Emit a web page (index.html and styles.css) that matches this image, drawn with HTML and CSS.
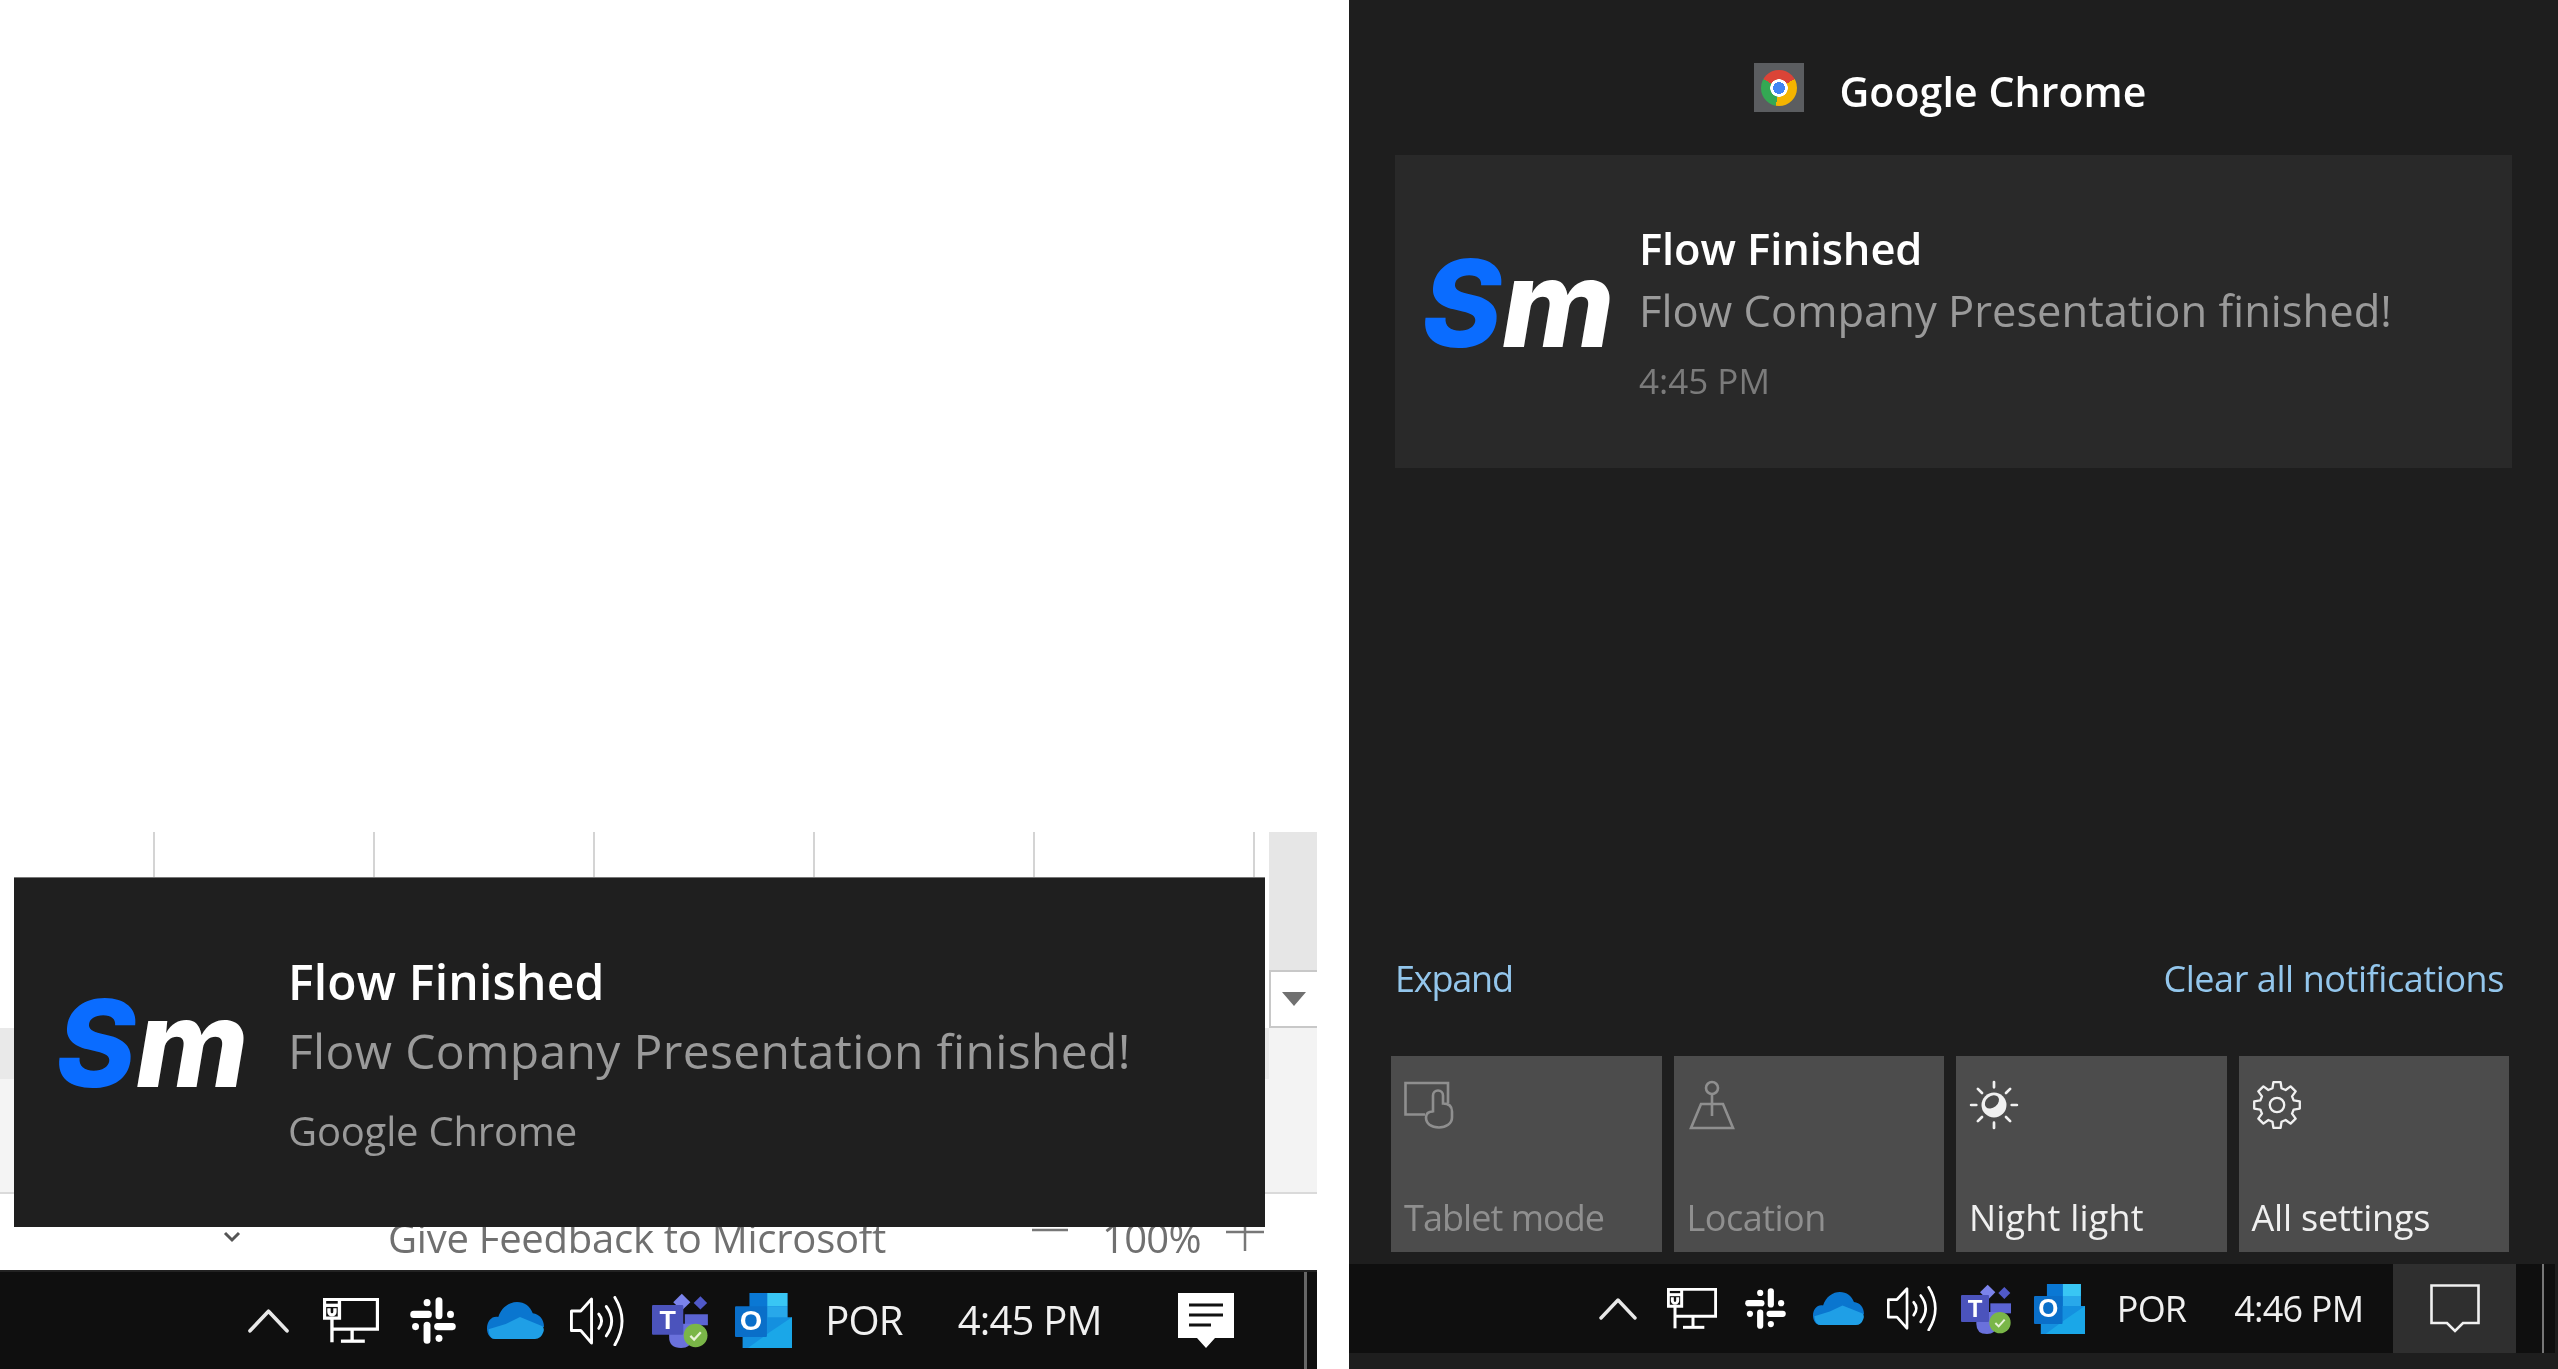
FILE: index.html
```html
<!DOCTYPE html>
<html lang="en">
<head>
<meta charset="utf-8">
<title>Windows notification comparison</title>
<link rel="stylesheet" href="styles.css">
</head>
<body>
<svg class="defs" aria-hidden="true">
  <symbol id="i-caret" viewBox="0 0 38 23"><path d="M2 21 19 3l17 18" fill="none" stroke="#e8e8e8" stroke-width="3.4" stroke-linecap="round" stroke-linejoin="round"/></symbol>
  <symbol id="i-net" viewBox="0 0 150 123" preserveAspectRatio="none"><g fill="none" stroke="#fff" stroke-width="9"><path d="M4 4H146V85H24"/><path d="M4 4H44V55H4Z"/><path d="M4 20H44"/><path d="M16 28v10a8 8 0 0 0 16 0V28"/><path d="M24 55V121"/><path d="M78 85V116"/><path d="M48 118H112"/></g></symbol>
  <symbol id="i-slack" viewBox="0 0 100 100" preserveAspectRatio="none"><g fill="none" stroke="#fff" stroke-width="15" stroke-linecap="round"><path d="M8 37H40"/><path d="M63 8V40"/><path d="M60 63H92"/><path d="M37 60V92"/><path d="M37 12H37.1"/><path d="M88 37H88.1"/><path d="M63 88H63.1"/><path d="M12 63H12.1"/></g></symbol>
  <symbol id="i-drive" viewBox="0 0 152 98" preserveAspectRatio="none"><path d="M30 40C38 14 60 0 80 0c20 0 36 12 42 30 18 2 30 16 30 36L60 98H22C8 98 0 84 0 70 0 50 14 36 30 40Z" fill="#0a76cf"/><path d="M4 72 50 58 88 40l60 24q6 8 2 16-6 18-22 18H22Q6 98 4 72Z" fill="#1f9fe6"/></symbol>
  <symbol id="i-vol" viewBox="0 0 156 133" preserveAspectRatio="none"><g fill="none" stroke="#fff" stroke-width="8" stroke-linecap="round" stroke-linejoin="round"><path d="M4 40H30L60 8V125L30 92H4Z"/><path d="M80 48q16 18 0 38"/><path d="M101 28q30 38 0 78"/><path d="M125 4q40 62 0 126"/></g></symbol>
  <symbol id="i-action-fill" viewBox="0 0 56 55" preserveAspectRatio="none"><path d="M0 0H56V45H37L28 55 19 45H0Z" fill="#fff"/><path d="M11 12H45M11 22H45M11 32H33" stroke="#111" stroke-width="3.2"/></symbol>
  <symbol id="i-action-line" viewBox="0 0 50 49" preserveAspectRatio="none"><path d="M1.500 1.500H48.500V39H33L25 47 17 39H1.500Z" fill="none" stroke="#f0f0f0" stroke-width="2.6"/></symbol>
</svg>

<main class="screen">
  <section class="desk">
    <div class="sheet">
      <div class="cols">
        <span class="col col-first"></span><span class="col"></span><span class="col"></span><span class="col"></span><span class="col"></span><span class="col"></span><span class="col col-last"></span>
      </div>
      <div class="scroll">
        <div class="scroll-top"></div>
        <div class="dropdown"><span class="tri"></span></div>
        <div class="scroll-fill"></div>
      </div>
    </div>

    <footer class="status">
      <svg class="chev" viewBox="0 0 20 12"><path d="M3 2l7 7 7-7" fill="none" stroke="#555" stroke-width="3"/></svg>
      <span class="status-text">Give Feedback to Microsoft</span>
      <svg class="zoom-minus" viewBox="0 0 36 4"><path d="M0 2H36" stroke="#777" stroke-width="2.5"/></svg>
      <span class="zoom-val">100%</span>
      <svg class="zoom-plus" viewBox="0 0 38 38"><path d="M0 19H38M19 0V38" stroke="#777" stroke-width="2.5"/></svg>
    </footer>

    <div class="taskbar taskbar-a">
      <div class="tray">
        <span class="slot"><svg class="t-caret"><use href="#i-caret"/></svg></span>
        <span class="slot"><svg class="t-net"><use href="#i-net"/></svg></span>
        <span class="slot"><svg class="t-slack"><use href="#i-slack"/></svg></span>
        <span class="slot"><svg class="t-drive"><use href="#i-drive"/></svg></span>
        <span class="slot"><svg class="t-vol"><use href="#i-vol"/></svg></span>
        <span class="slot"><svg class="t-teams" viewBox="0 0 153 150" preserveAspectRatio="none">
          <path d="M80 2 103 25 80 48 57 25Z" fill="#7b83eb"/><path d="M130 9 148 27 130 45 112 27Z" fill="#5059c9"/>
          <path d="M88 58h62v30H88Z" fill="#5b64d3"/><path d="M46 84h62v40q-4 26-30 26-32 0-32-30Z" fill="#6a71dc"/>
          <rect x="0" y="33" width="84" height="81" rx="3" fill="#4b53bc"/>
          <text class="icon-letter" x="42" y="98" text-anchor="middle">T</text>
          <circle cx="117" cy="116" r="32" fill="#7ab648"/><path d="M103 117l10 10 18-20" fill="none" stroke="#e8f3d8" stroke-width="6"/>
        </svg></span>
        <span class="slot"><svg class="t-outlook" viewBox="0 0 150 150" preserveAspectRatio="none">
          <path d="M38 0H138V72H38Z" fill="#0a78d4"/><path d="M85 0H138V36H85Z" fill="#39c6f4"/><path d="M85 36H138V72H85Z" fill="#28a8ea"/>
          <path d="M20 66H150V150H20Z" fill="#1490df"/><path d="M90 108 150 66V150H34Z" fill="#1aa7e8"/>
          <rect x="0" y="36" width="84" height="84" rx="3" fill="#0a6fc9"/>
          <text class="icon-letter icon-letter-o" x="42" y="100" text-anchor="middle">O</text>
        </svg></span>
      </div>
      <span class="lang">POR</span>
      <span class="clock">4:45 PM</span>
      <svg class="action-icon"><use href="#i-action-fill"/></svg>
      <span class="vline"></span>
    </div>

    <article class="toast">
      <div class="logo"><span class="logo-s">S</span><span class="logo-m">m</span></div>
      <div class="toast-text">
        <div class="title">Flow Finished</div>
        <div class="body">Flow Company Presentation finished!</div>
        <div class="source">Google Chrome</div>
      </div>
    </article>
  </section>

  <aside class="panel">
    <header class="app-head">
      <div class="app-icon"><span class="chrome"></span></div>
      <span class="app-name">Google Chrome</span>
    </header>

    <article class="card">
      <div class="logo"><span class="logo-s">S</span><span class="logo-m">m</span></div>
      <div class="card-text">
        <div class="card-title">Flow Finished</div>
        <div class="card-body">Flow Company Presentation finished!</div>
        <div class="card-time">4:45 PM</div>
      </div>
    </article>

    <div class="links">
      <span class="link link-short">Expand</span>
      <span class="link">Clear all notifications</span>
    </div>

    <div class="tiles">
      <div class="tile tile-off">
        <svg class="tile-icon" viewBox="0 0 50 47"><g fill="none" stroke="#8f8f8f" stroke-width="2.6"><path d="M21 33H1.500V1.500H44V22"/><path d="M29 31V14a5 5 0 0 1 10 0V22c5 0 9 2 9 8v6c0 6-6 10-13 10-8 0-13-4-13-10 0-4 3-6 7-6"/></g></svg>
        <span class="tile-label label-tablet">Tablet mode</span>
      </div>
      <div class="tile tile-off">
        <svg class="tile-icon" viewBox="0 0 46 50"><g fill="none" stroke="#8f8f8f" stroke-width="2.6"><circle cx="23" cy="8" r="6"/><path d="M23 14V36"/><path d="M12 24H34L44 48H2Z"/></g></svg>
        <span class="tile-label">Location</span>
      </div>
      <div class="tile">
        <svg class="tile-icon" viewBox="0 0 48 48"><g stroke="#f0f0f0" stroke-width="2.6" stroke-linecap="round"><path d="M24 2V7M24 41V46M2 24H7M41 24H46M8.500 8.500l4 4M35.500 35.500l4 4M8.500 39.500l4-4M35.500 12.500l4-4"/></g><circle cx="24" cy="24" r="12" fill="#f0f0f0"/><ellipse cx="22" cy="21" rx="7.500" ry="5.500" fill="#4c4c4c" transform="rotate(-40 22 21)"/></svg>
        <span class="tile-label label-night">Night light</span>
      </div>
      <div class="tile">
        <svg class="tile-icon" viewBox="-26 -26 52 52"><polygon fill="none" stroke="#f0f0f0" stroke-width="2.4" stroke-linejoin="round" points="17.4,-4.7 23.7,-3.75 23.7,3.75 17.4,4.7 15.63,8.98 19.41,14.11 14.11,19.41 8.98,15.63 4.7,17.4 3.75,23.7 -3.75,23.7 -4.7,17.4 -8.98,15.63 -14.11,19.41 -19.41,14.11 -15.63,8.98 -17.4,4.7 -23.7,3.75 -23.7,-3.75 -17.4,-4.7 -15.63,-8.98 -19.41,-14.11 -14.11,-19.41 -8.98,-15.63 -4.7,-17.4 -3.75,-23.7 3.75,-23.7 4.7,-17.4 8.98,-15.63 14.11,-19.41 19.41,-14.11 15.63,-8.98"/><circle r="7.500" fill="none" stroke="#f0f0f0" stroke-width="2.4"/></svg>
        <span class="tile-label label-all">All settings</span>
      </div>
    </div>

    <div class="taskbar taskbar-b">
      <div class="tray">
        <span class="slot"><svg class="t-caret"><use href="#i-caret"/></svg></span>
        <span class="slot"><svg class="t-net"><use href="#i-net"/></svg></span>
        <span class="slot"><svg class="t-slack"><use href="#i-slack"/></svg></span>
        <span class="slot"><svg class="t-drive"><use href="#i-drive"/></svg></span>
        <span class="slot"><svg class="t-vol"><use href="#i-vol"/></svg></span>
        <span class="slot"><svg class="t-teams" viewBox="0 0 153 150" preserveAspectRatio="none">
          <path d="M80 2 103 25 80 48 57 25Z" fill="#7b83eb"/><path d="M130 9 148 27 130 45 112 27Z" fill="#5059c9"/>
          <path d="M88 58h62v30H88Z" fill="#5b64d3"/><path d="M46 84h62v40q-4 26-30 26-32 0-32-30Z" fill="#6a71dc"/>
          <rect x="0" y="33" width="84" height="81" rx="3" fill="#4b53bc"/>
          <text class="icon-letter" x="42" y="98" text-anchor="middle">T</text>
          <circle cx="117" cy="116" r="32" fill="#7ab648"/><path d="M103 117l10 10 18-20" fill="none" stroke="#e8f3d8" stroke-width="6"/>
        </svg></span>
        <span class="slot"><svg class="t-outlook" viewBox="0 0 150 150" preserveAspectRatio="none">
          <path d="M38 0H138V72H38Z" fill="#0a78d4"/><path d="M85 0H138V36H85Z" fill="#39c6f4"/><path d="M85 36H138V72H85Z" fill="#28a8ea"/>
          <path d="M20 66H150V150H20Z" fill="#1490df"/><path d="M90 108 150 66V150H34Z" fill="#1aa7e8"/>
          <rect x="0" y="36" width="84" height="84" rx="3" fill="#0a6fc9"/>
          <text class="icon-letter icon-letter-o" x="42" y="100" text-anchor="middle">O</text>
        </svg></span>
      </div>
      <span class="lang">POR</span>
      <span class="clock">4:46 PM</span>
      <div class="action-btn"><svg class="action-icon"><use href="#i-action-line"/></svg></div>
      <span class="vline"></span>
    </div>
  </aside>
</main>
</body>
</html>
```

FILE: styles.css
```css
* { box-sizing: border-box; }
html, body { margin: 0; padding: 0; background: #fff; }
body { font-family: "Open Sans", "Noto Sans", sans-serif; }
.defs { position: absolute; width: 0; height: 0; overflow: hidden; }
.icon-letter { font: 700 72px "Liberation Sans", sans-serif; fill: #fff; }
.icon-letter-o { font-size: 76px; }

.screen { display: flex; width: 2558px; height: 1369px; overflow: hidden; filter: blur(0.7px); }

/* Left: desktop with toast */
.desk { position: relative; width: 1349px; flex: none; display: flex; flex-direction: column; background: #fff; padding-top: 832px; }
.sheet { display: flex; width: 1317px; height: 362px; border-bottom: 2px solid #dadada;
  background: linear-gradient(to bottom, #fff 0 196px, #e9e9e9 196px 247px, #f4f4f4 247px 100%); }
.cols { display: flex; width: 1269px; height: 60px; flex: none; }
.col { width: 220px; flex: none; border-left: 2px solid #d4d4d4; }
.col-first { width: 153px; border-left: 0; }
.col-last { width: 16px; }
.scroll { flex: 1; display: flex; flex-direction: column; }
.scroll-top { height: 138px; background: #e6e6e6; }
.dropdown { height: 58px; background: #fff; border: 2px solid #c8c8c8; border-right: 0; display: flex; align-items: center; justify-content: center; }
.tri { width: 0; height: 0; border-left: 12px solid transparent; border-right: 12px solid transparent; border-top: 14px solid #707070; }
.scroll-fill { flex: 1; background: #f3f3f3; }

.status { height: 76px; width: 1317px; display: flex; align-items: center; padding: 10px 0 0 222px; color: #707070; font-size: 40px; }
.chev { width: 20px; height: 12px; flex: none; }
.status-text { margin-left: 146px; letter-spacing: -0.25px; white-space: nowrap; }
.zoom-minus { width: 36px; height: 4px; flex: none; margin-left: 146px; position: relative; top: -7px; }
.zoom-val { margin-left: 34px; letter-spacing: -0.7px; }
.zoom-plus { width: 38px; height: 38px; flex: none; margin-left: 25px; position: relative; top: -5px; }

.toast { position: absolute; left: 14px; top: 877px; width: 1251px; height: 350px; background: #1f1f1f; border-top: 1px solid #777; display: flex; align-items: flex-start; padding-left: 42px; }
.toast .logo { margin-top: 106px; width: 232px; }
.toast-text { padding-top: 74px; }
.title { font-size: 48px; font-weight: 600; line-height: 60px; color: #fff; letter-spacing: 0.2px; white-space: nowrap; }
.body { font-size: 48px; line-height: 78px; color: #9a9a9a; letter-spacing: 0.35px; white-space: nowrap; }
.source { font-size: 40px; line-height: 82px; color: #9a9a9a; letter-spacing: -0.2px; white-space: nowrap; }

.logo { flex: none; font-family: Inter, sans-serif; font-size: 121px; font-weight: 800; font-style: italic; line-height: 118px; white-space: nowrap; }
.logo-s { color: #0a6cff; }
.logo-m { color: #fff; }

/* Right: action center */
.panel { flex: 1; height: 1369px; background: #1e1e1e; display: flex; flex-direction: column; }
.app-head { display: flex; align-items: center; justify-content: center; gap: 35px; padding: 63px 6px 0 0; height: 112px; flex: none; }
.app-icon { width: 50px; height: 49px; background: #5b5d60; display: flex; align-items: center; justify-content: center; }
.chrome { width: 36px; height: 36px; border-radius: 50%; background: radial-gradient(circle, #4285f4 0 6px, #fff 6px 8.500px, transparent 9px), conic-gradient(#db4437 0 60deg, #f4b400 60deg 190deg, #34a853 190deg 300deg, #db4437 300deg 360deg); }
.app-name { font-size: 41px; font-weight: 600; color: #fff; letter-spacing: 0.1px; position: relative; top: 3px; }

.card { margin: 43px 46px 0; height: 313px; flex: none; background: #292929; display: flex; align-items: flex-start; padding-left: 27px; }
.card .logo { margin-top: 89px; width: 217px; }
.card-text { padding-top: 69px; }
.card-title { font-size: 43.500px; font-weight: 600; line-height: 50px; color: #fff; letter-spacing: -0.1px; white-space: nowrap; }
.card-body { font-size: 43.500px; line-height: 74px; color: #9a9a9a; white-space: nowrap; }
.card-time { font-size: 35px; line-height: 66px; color: #7b7b7b; white-space: nowrap; }

.links { margin-top: auto; display: flex; justify-content: space-between; padding: 0 54px 0 46px; height: 56px; flex: none; align-items: center; margin-bottom: 50px; }
.link { font-size: 36px; color: #93c6ec; letter-spacing: -0.43px; white-space: nowrap; }
.link-short { letter-spacing: -1.200px; }

.tiles { display: grid; grid-template-columns: repeat(4, 270.5px); gap: 12px; padding-left: 42px; flex: none; margin-bottom: 12px; }
.tile { height: 196px; background: #4c4c4c; display: flex; flex-direction: column; justify-content: space-between; padding: 24px 13px 14px; color: #f0f0f0; }
.tile-off { color: #8f8f8f; }
.tile-icon { width: 50px; height: 50px; }
.tile-label { font-size: 36px; line-height: 40px; letter-spacing: -0.5px; white-space: nowrap; }
.label-tablet { letter-spacing: -0.95px; }
.label-night { letter-spacing: 0.2px; }
.label-all { letter-spacing: -0.2px; }

/* Taskbars */
.taskbar { display: flex; align-items: center; background: #0f0f0f; color: #f0f0f0; flex: none; }
.taskbar-a { height: 99px; width: 1317px; border-top: 2px solid #222; padding-left: 226.750px; font-size: 40px; }
.taskbar-b { height: 89px; margin-bottom: 16px; margin-right: 3px; padding-left: 232px; font-size: 36px; }
.tray { display: flex; align-items: center; flex: none; }
.slot { display: flex; align-items: center; justify-content: center; flex: none; }
.taskbar-a .slot { width: 82.500px; }
.taskbar-b .slot { width: 73.700px; }
.lang, .clock { white-space: nowrap; letter-spacing: -0.8px; }

.taskbar-a .t-caret { width: 43px; height: 25px; }
.taskbar-a .t-net { width: 56px; height: 45px; }
.taskbar-a .t-slack { width: 46px; height: 47px; }
.taskbar-a .t-drive { width: 57px; height: 37px; }
.taskbar-a .t-vol { width: 56px; height: 50px; }
.taskbar-a .t-teams, .taskbar-a .t-outlook { width: 57px; height: 55px; }
.taskbar-a .lang { margin: 0 0 3px 21px; }
.taskbar-a .clock { margin: 0 0 3px 55px; }
.taskbar-a .action-icon { width: 56px; height: 55px; margin-left: 76px; flex: none; }
.taskbar-a .vline { width: 3px; align-self: stretch; background: #666; margin-left: 70px; }

.taskbar-b .t-caret { width: 38px; height: 23px; }
.taskbar-b .t-net { width: 50px; height: 41px; }
.taskbar-b .t-slack { width: 41px; height: 41px; }
.taskbar-b .t-drive { width: 51px; height: 33px; }
.taskbar-b .t-vol { width: 52px; height: 45px; }
.taskbar-b .t-teams, .taskbar-b .t-outlook { width: 51px; height: 50px; }
.taskbar-b .lang { margin-left: 20px; }
.taskbar-b .clock { margin-left: 48px; }
.action-btn { width: 123px; align-self: stretch; background: #2f2f2f; margin-left: 30px; display: flex; align-items: center; justify-content: center; flex: none; }
.taskbar-b .action-icon { width: 50px; height: 49px; }
.taskbar-b .vline { width: 2px; align-self: stretch; background: #777; margin-left: 26px; }
```
